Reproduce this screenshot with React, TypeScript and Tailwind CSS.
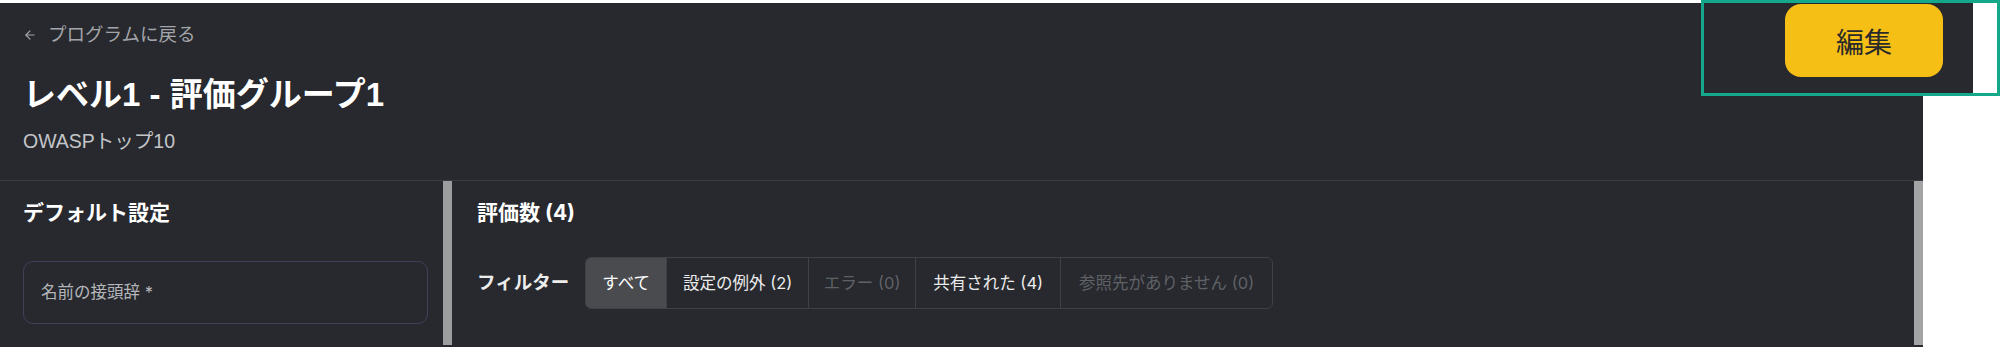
import { ArrowLeft } from 'lucide-react';

const filters = [
  { label: 'すべて', active: true, muted: false, w: 'w-[80px]' },
  { label: '設定の例外 (2)', active: false, muted: false, w: 'w-[142px]' },
  { label: 'エラー (0)', active: false, muted: true, w: 'w-[107px]' },
  { label: '共有された (4)', active: false, muted: false, w: 'w-[145px]' },
  { label: '参照先がありません (0)', active: false, muted: true, w: 'w-[212px]' },
];

function FilterBar() {
  return (
    <div className="flex h-[52px] overflow-hidden rounded-[6px] border border-[#3f4146]">
      {filters.map((f, i) => (
        <div
          key={f.label}
          className={
            'flex items-center justify-center text-[16.5px] whitespace-nowrap ' +
            f.w +
            (i > 0 ? ' border-l border-[#3f4146]' : '') +
            (f.active ? ' bg-[#4a4b4f] text-white' : f.muted ? ' text-[#5f6166]' : ' text-[#ececec]')
          }
        >
          {f.label}
        </div>
      ))}
    </div>
  );
}

export default function App() {
  return (
    <div
      className="relative h-[347px] w-[2000px] overflow-hidden bg-white pt-[3px]"
      style={{ fontFamily: '"Liberation Sans", "Noto Sans CJK JP", sans-serif' }}
    >
      <div className="h-[344px] w-[1923px] bg-[#27292e]">
        {/* header */}
        <div className="border-b border-[#3a3c41] px-[23px] pt-[20px] pb-[26px]">
          <div className="flex h-[24px] items-center gap-[11px] text-[18.5px] text-[#a3a5aa]">
            <ArrowLeft className="h-[14px] w-[14px]" strokeWidth={2} />
            <span>プログラムに戻る</span>
          </div>
          <h1 className="mt-[28px] h-[40px] text-[33px] leading-[40px] font-bold text-white">
            レベル1 - 評価グループ1
          </h1>
          <div className="mt-[13px] h-[26px] text-[19.5px] leading-[26px] text-[#c3c5c9]">OWASPトップ10</div>
        </div>

        {/* body */}
        <div className="flex h-[164px]" style={{ fontFamily: 'Inter, "Noto Sans CJK JP", sans-serif' }}>
          <div className="w-[443px] pt-[18px] pl-[23px] pr-[15px]">
            <h2 className="h-[28px] text-[21px] leading-[28px] font-bold text-white">デフォルト設定</h2>
            <div className="mt-[34px] flex h-[63px] items-center rounded-[10px] border border-[#3f4159] px-[17px] text-[16.5px] text-[#b4b6ba]">
              名前の接頭辞 *
            </div>
          </div>
          <div className="w-[9px] bg-[#9c9d9f]" />
          <div className="flex-1 pt-[18px] pl-[25px]">
            <h2 className="h-[28px] text-[21px] leading-[28px] font-bold text-white">評価数 (4)</h2>
            <div className="mt-[30px] flex items-center gap-[16px]">
              <span className="text-[18.5px] font-bold text-[#ececec]">フィルター</span>
              <FilterBar />
            </div>
          </div>
          <div className="w-[9px] bg-[#a3a4a6]" />
        </div>
      </div>

      {/* highlighted action area */}
      <div className="absolute top-0 left-[1701px] flex h-[96px] w-[299px] border-[3px] border-[#14a88a]">
        <div className="flex w-[269px] justify-end bg-[#27292e] pt-[1px] pr-[30px]">
          <button className="flex h-[73px] w-[158px] items-center justify-center rounded-[16px] bg-[#f6bf16] text-[28px] text-[#2a2a2a]" style={{ fontFamily: '"Noto Sans CJK JP", sans-serif' }}>
            編集
          </button>
        </div>
        <div className="flex-1 bg-white" />
      </div>
    </div>
  );
}
